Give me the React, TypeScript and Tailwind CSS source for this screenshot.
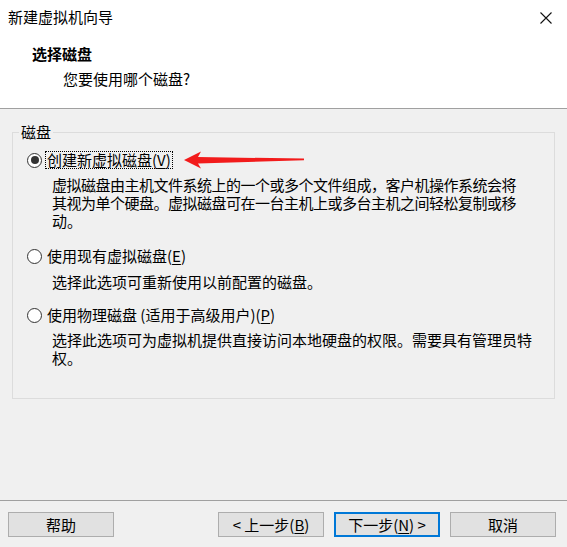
import React from "react";

const font = "font-['Noto_Sans_CJK_SC',sans-serif]";

function Radio({ checked }: { checked?: boolean }) {
  return (
    <span className="w-[15px] h-[15px] rounded-full border border-[#333333] bg-white flex items-center justify-center shrink-0">
      {checked && <span className="w-[8px] h-[8px] rounded-full bg-[#333333]" />}
    </span>
  );
}

function Key({ k }: { k: string }) {
  return <span className="underline underline-offset-2">{k}</span>;
}

type Line = { text: string; tight?: boolean };

function Option({
  checked,
  focused,
  label,
  lines,
  className,
  descGap = "mt-[7px]",
  children,
}: {
  checked?: boolean;
  focused?: boolean;
  label: React.ReactNode;
  lines: Line[];
  className?: string;
  descGap?: string;
  children?: React.ReactNode;
}) {
  return (
    <div className={className}>
      <div className="relative flex items-center h-[18px] ml-[14px] gap-[3px]">
        <Radio checked={checked} />
        <span
          className={
            "h-[18px] leading-[16px] pl-[1px] pr-[1px] border " +
            (focused ? "border-dotted border-black" : "border-transparent")
          }
        >
          {label}
        </span>
        {children}
      </div>
      <div className={"pl-[39px] leading-[18px] " + descGap}>
        {lines.map((l) => (
          <div key={l.text} className={"whitespace-nowrap " + (l.tight ? "tracking-[-0.5px]" : "")}>
            {l.text}
          </div>
        ))}
      </div>
    </div>
  );
}

function Button({ children, primary }: { children: React.ReactNode; primary?: boolean }) {
  return (
    <button
      className={
        "w-[106px] h-[25px] bg-[#e1e1e1] flex items-center justify-center text-[15px] leading-none text-black " +
        (primary ? "border-2 border-[#0078d7]" : "border border-[#adadad]")
      }
    >
      {children}
    </button>
  );
}

export default function App() {
  return (
    <div className={"w-[567px] h-[547px] flex flex-col bg-[#f0f0f0] text-black text-[15px] " + font}>
      {/* Header */}
      <header className="h-[108px] bg-white relative shrink-0">
        <div className="flex items-center justify-between pl-[8px] pr-[15px] pt-[7px] h-[27px]">
          <span className="leading-[20px]">新建虚拟机向导</span>
          <svg width="12" height="12" viewBox="0 0 12 12" className="mt-[1px]">
            <path d="M0.5 0.5 L11.5 11.5 M11.5 0.5 L0.5 11.5" stroke="#111" strokeWidth="1.1" />
          </svg>
        </div>
        <div className="pl-[32px] mt-[17px] font-bold leading-[20px]">选择磁盘</div>
        <div className="pl-[63px] mt-[5px] leading-[20px]">您要使用哪个磁盘?</div>
      </header>
      <div className="h-px bg-[#a0a0a0] shrink-0" />

      {/* Disk group */}
      <fieldset className="mx-[12px] mt-[14px] border border-[#dcdcdc] pb-[31px] shrink-0">
        <legend className="ml-[6px] px-[2px] leading-[18px]">磁盘</legend>
        <Option
          className="mt-[10px]"
          checked
          focused
          label={
            <>
              创建新虚拟磁盘(<Key k="V" />)
            </>
          }
          lines={[
            { text: "虚拟磁盘由主机文件系统上的一个或多个文件组成，客户机操作系统会将", tight: true },
            { text: "其视为单个硬盘。虚拟磁盘可在一台主机上或多台主机之间轻松复制或移", tight: true },
            { text: "动。" },
          ]}
        >
          {/* red annotation arrow */}
          <svg
            className="absolute left-[157px] top-[0px]"
            width="120"
            height="18"
            viewBox="0 0 120 18"
          >
            <polygon points="0,9 17,0.5 14,6 120,7.6 120,9.2 14,12.5 17,17.5" fill="#f21b1b" />
          </svg>
        </Option>
        <Option
          className="mt-[17px]"
          descGap="mt-[8px]"
          label={
            <>
              使用现有虚拟磁盘(<Key k="E" />)
            </>
          }
          lines={[{ text: "选择此选项可重新使用以前配置的磁盘。" }]}
        />
        <Option
          className="mt-[15px]"
          label={
            <>
              使用物理磁盘 (适用于高级用户)(<Key k="P" />)
            </>
          }
          lines={[
            { text: "选择此选项可为虚拟机提供直接访问本地硬盘的权限。需要具有管理员特" },
            { text: "权。" },
          ]}
        />
      </fieldset>

      <div className="flex-1" />
      <div className="h-px bg-[#a0a0a0] shrink-0" />

      {/* Buttons */}
      <div className="flex items-center pl-[8px] pr-[11px] pt-[11px] pb-[10px] shrink-0">
        <Button>帮助</Button>
        <div className="flex-1" />
        <div className="flex gap-[10px]">
          <Button>
            &lt; 上一步(<Key k="B" />)
          </Button>
          <Button primary>
            下一步(<Key k="N" />) &gt;
          </Button>
          <Button>取消</Button>
        </div>
      </div>
    </div>
  );
}
